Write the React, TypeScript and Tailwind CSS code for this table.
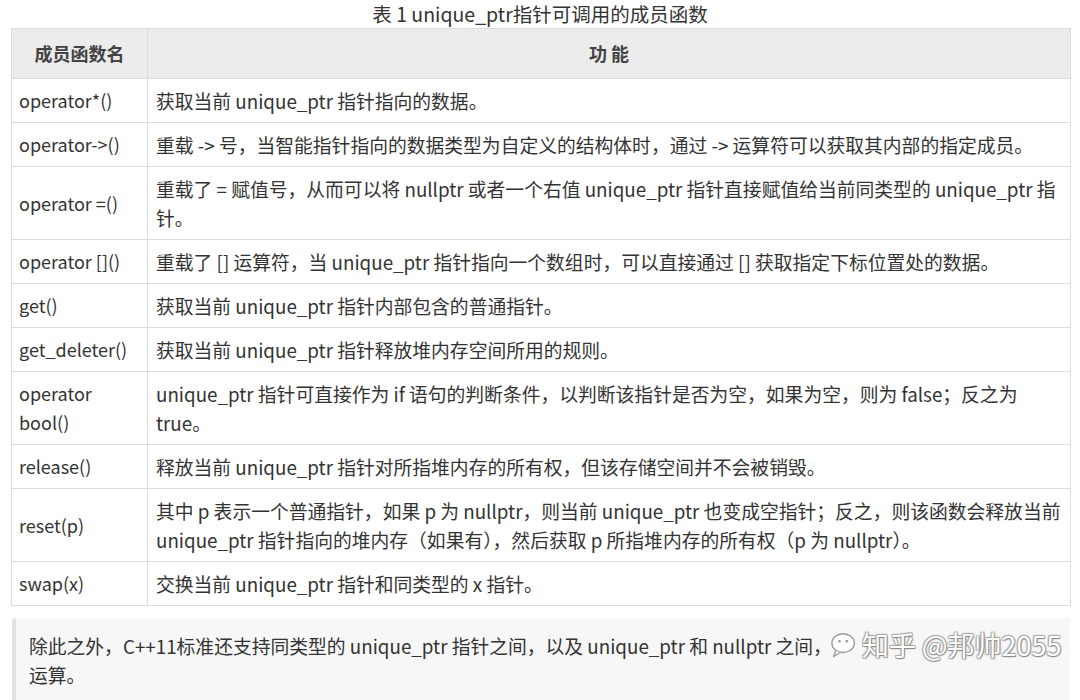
const rows: [string, string][] = [
  ['operator*()', '获取当前 unique_ptr 指针指向的数据。'],
  ['operator->()', '重载 -> 号，当智能指针指向的数据类型为自定义的结构体时，通过 -> 运算符可以获取其内部的指定成员。'],
  ['operator =()', '重载了 = 赋值号，从而可以将 nullptr 或者一个右值 unique_ptr 指针直接赋值给当前同类型的 unique_ptr 指针。'],
  ['operator []()', '重载了 [] 运算符，当 unique_ptr 指针指向一个数组时，可以直接通过 [] 获取指定下标位置处的数据。'],
  ['get()', '获取当前 unique_ptr 指针内部包含的普通指针。'],
  ['get_deleter()', '获取当前 unique_ptr 指针释放堆内存空间所用的规则。'],
  ['operator bool()', 'unique_ptr 指针可直接作为 if 语句的判断条件，以判断该指针是否为空，如果为空，则为 false；反之为 true。'],
  ['release()', '释放当前 unique_ptr 指针对所指堆内存的所有权，但该存储空间并不会被销毁。'],
  ['reset(p)', '其中 p 表示一个普通指针，如果 p 为 nullptr，则当前 unique_ptr 也变成空指针；反之，则该函数会释放当前 unique_ptr 指针指向的堆内存（如果有），然后获取 p 所指堆内存的所有权（p 为 nullptr）。'],
  ['swap(x)', '交换当前 unique_ptr 指针和同类型的 x 指针。'],
]

export default function App() {
  return (
    <div
      className="relative h-[700px] w-[1080px] overflow-hidden bg-white text-[#333]"
      style={{ fontFamily: '"Noto Sans CJK SC", "Noto Sans", sans-serif' }}
    >
      <div className="text-center text-[19.5px] leading-[28px] text-[#333]">
        表 1 unique_ptr指针可调用的成员函数
      </div>
      <div className="pl-[11px] pr-[9px]">
        <table className="w-full border-collapse text-[18px] leading-[29px]">
          <thead>
            <tr className="bg-[#ececec]">
              <th className="w-[136px] border border-[#dcdcdc] py-[10px] text-center font-bold text-[#444]">
                成员函数名
              </th>
              <th className="border border-[#dcdcdc] py-[10px] text-center font-bold text-[#444]">
                功 能
              </th>
            </tr>
          </thead>
          <tbody>
            {rows.map(([name, desc]) => (
              <tr key={name}>
                <td className="border border-[#dcdcdc] px-[7px] py-[7px] align-middle">
                  {name}
                </td>
                <td className="border border-[#dcdcdc] px-[8px] py-[7px] align-middle text-[18.8px]">
                  {desc}
                </td>
              </tr>
            ))}
          </tbody>
        </table>
      </div>
      <div className="ml-[12px] mr-[10px] mt-[12px] rounded-l-[4px] border-l-[4px] border-[#e2e2e2] bg-[#f7f7f7] pb-[30px] pl-[13px] pr-[20px] pt-[13px] text-[18.8px] leading-[29px]">
        除此之外，C++11标准还支持同类型的 unique_ptr 指针之间，以及 unique_ptr 和 nullptr 之间，做 ==，!=，&lt;，&lt;=，&gt;，&gt;=
        <br />
        运算。
      </div>
      <div
        className="absolute left-[830px] top-[628px] flex items-center gap-[2px] bg-[#f7f7f7] pr-[4px] text-[27px] leading-[34px] text-white"
        style={{ textShadow: '1px 1px 1px #888, -1px -1px 1px #aaa, 1px -1px 1px #aaa, -1px 1px 1px #aaa' }}
      >
        <svg width="30" height="30" viewBox="0 0 32 30">
          <ellipse cx="14" cy="13" rx="12" ry="10" fill="white" stroke="#999" strokeWidth="1.4" />
          <path d="M6 21 L4 27 L11 23" fill="white" stroke="#999" strokeWidth="1.4" />
          <circle cx="10" cy="11" r="1.4" fill="#999" />
          <circle cx="18" cy="11" r="1.4" fill="#999" />
        </svg>
        <span>知乎 @邦帅2055</span>
      </div>
    </div>
  )
}
